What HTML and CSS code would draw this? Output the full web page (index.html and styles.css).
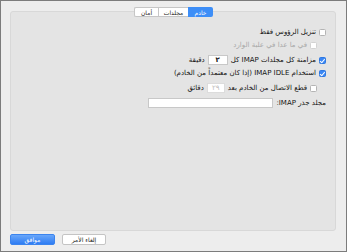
FILE: index.html
```html
<!DOCTYPE html>
<html lang="ar" dir="rtl">

<head>
    <meta charset="UTF-8">
    <title>خادم</title>
    <link rel="stylesheet" href="styles.css">
</head>

<body>
    <div class="window">
        <div class="panel">
            <div class="tabs">
                <span class="tab active">خادم</span>
                <span class="tab">مجلدات</span>
                <span class="tab">أمان</span>
            </div>

            <div class="row row-1">
                <span class="check"></span>
                <span>تنزيل الرؤوس فقط</span>
            </div>

            <div class="row row-2 indent disabled">
                <span class="check"></span>
                <span>في ما عدا في علبة الوارد</span>
            </div>

            <div class="row row-3">
                <span class="check on"></span>
                <span>مزامنة كل مجلدات IMAP كل</span>
                <span class="field small">٢</span>
                <span>دقيقة</span>
            </div>

            <div class="row row-4">
                <span class="check on"></span>
                <span>استخدام IMAP IDLE (إذا كان معتمداً من الخادم)</span>
            </div>

            <div class="row row-5 indent">
                <span class="check"></span>
                <span>قطع الاتصال من الخادم بعد</span>
                <span class="field small off">٢٩</span>
                <span>دقائق</span>
            </div>

            <div class="row row-6">
                <span>مجلد جذر IMAP:</span>
                <span class="field wide"></span>
            </div>
        </div>

        <div class="buttons">
            <button class="btn">إلغاء الأمر</button>
            <button class="btn primary">موافق</button>
        </div>
    </div>
</body>

</html>
```

FILE: styles.css
```css
body {
    margin: 0;
    font-family: 'DejaVu Sans', sans-serif;
    font-size: 7px;
    color: #111;
}

.window {
    width: 347px;
    height: 252px;
    box-sizing: border-box;
    border: 1px solid #7c7c7c;
    background-color: #ededed;
    padding: 10px 10px 0 9px;
}

.panel {
    height: 220px;
    box-sizing: border-box;
    background-color: #e4e4e4;
    border: 1px solid #d8d8d8;
    border-radius: 3px;
    padding: 0 9px 0 10px;
}

.tabs {
    display: flex;
    justify-content: center;
    margin-top: -5px;
    height: 10px;
    margin-bottom: 10px;
}

.tab {
    display: flex;
    align-items: center;
    justify-content: center;
    height: 10px;
    box-sizing: border-box;
    background-color: #fff;
    border: 1px solid #c6c6c6;
    border-right: none;
    font-size: 6px;
    color: #222;
}

.tab:nth-child(1) {
    width: 25px;
    border-radius: 0 2px 2px 0;
    border: none;
}

.tab:nth-child(2) {
    width: 30px;
}

.tab:nth-child(3) {
    width: 24px;
    border-radius: 2px 0 0 2px;
}

.tab.active {
    background-color: #3d8ef7;
    color: #fff;
}

.row {
    display: flex;
    align-items: center;
    gap: 3px;
    height: 10px;
    white-space: nowrap;
}

.row-2 { margin-top: 3px; }
.row-3 { margin-top: 5px; }
.row-4 { margin-top: 3px; }
.row-5 { margin-top: 5px; }
.row-6 { margin-top: 5px; }

.indent {
    padding-right: 9px;
}

.disabled {
    color: #a8a8a8;
}

.check {
    width: 7px;
    height: 7px;
    box-sizing: border-box;
    background-color: #fff;
    border: 1px solid #b4b4b4;
    border-radius: 1.5px;
    position: relative;
}

.disabled .check {
    border-color: #d2d2d2;
}

.check.on {
    background-color: #3a87f5;
    border-color: #2f78e0;
}

.check.on::after {
    content: '';
    position: absolute;
    left: 1px;
    top: 0;
    width: 2px;
    height: 3.5px;
    border: solid #fff;
    border-width: 0 1px 1px 0;
    transform: rotate(40deg);
}

.field {
    display: flex;
    align-items: center;
    justify-content: center;
    height: 10px;
    box-sizing: border-box;
    background-color: #fff;
    border: 1px solid #c8c8c8;
    font-weight: bold;
}

.field.small {
    width: 20px;
}

.field.off {
    width: 18px;
    color: #bdbdbd;
    font-weight: normal;
    border-color: #dcdcdc;
}

.field.wide {
    width: 125px;
}

.buttons {
    display: flex;
    justify-content: flex-end;
    gap: 7px;
    margin-top: 3px;
}

.btn {
    height: 11px;
    width: 44px;
    padding: 0;
    font-family: 'DejaVu Sans', sans-serif;
    font-size: 6px;
    color: #222;
    background-color: #fff;
    border: 1px solid #c4c4c4;
    border-radius: 2px;
}

.btn.primary {
    width: 45px;
    color: #fff;
    border-color: #3b84ee;
    background: linear-gradient(#68a6fa, #2f7df3);
}
```
